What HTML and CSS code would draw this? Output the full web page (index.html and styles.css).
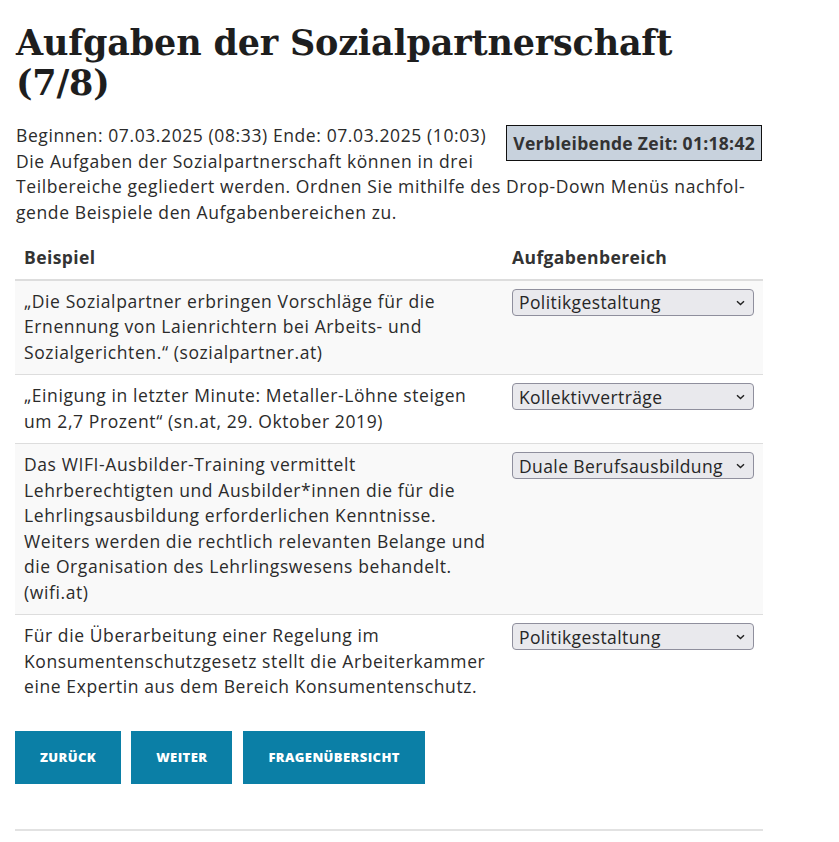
FILE: index.html
```html
<!DOCTYPE html>
<html lang="de">
<head>
<meta charset="utf-8">
<title>Aufgaben der Sozialpartnerschaft</title>
<link rel="stylesheet" href="styles.css">
</head>
<body>
<main class="page">
  <h1 class="title">Aufgaben der Sozialpartnerschaft (7/8)</h1>
  <div class="intro">
    <div class="timer">Verbleibende Zeit: 01:18:42</div>
    <p>Beginnen: 07.03.2025 (08:33) Ende: 07.03.2025 (10:03)<br>Die Aufgaben der Sozialpartnerschaft können in drei Teilbereiche gegliedert werden. Ordnen Sie mithilfe des Drop-Down Menüs nachfol&shy;gende Beispiele den Aufgabenbereichen zu.</p>
  </div>
  <table class="quiz">
    <thead>
      <tr><th class="col-ex">Beispiel</th><th class="col-sel">Aufgabenbereich</th></tr>
    </thead>
    <tbody>
      <tr class="odd">
        <td>„Die Sozialpartner erbringen Vorschläge für die Ernennung von Laienrichtern bei Arbeits- und Sozialgerichten.“ (sozialpartner.at)</td>
        <td><div class="pick-wrap"><select class="pick"><option>Politikgestaltung</option><option>Kollektivverträge</option><option>Duale Berufsausbildung</option></select><svg class="chev" width="9" height="6" viewBox="0 0 9 6"><path d="M1 1.2 L4.5 4.6 L8 1.2" fill="none" stroke="#222" stroke-width="1.4"/></svg></div></td>
      </tr>
      <tr>
        <td>„Einigung in letzter Minute: Metaller-Löhne steigen um 2,7 Prozent“ (sn.at, 29. Oktober 2019)</td>
        <td><div class="pick-wrap"><select class="pick"><option>Kollektivverträge</option><option>Politikgestaltung</option><option>Duale Berufsausbildung</option></select><svg class="chev" width="9" height="6" viewBox="0 0 9 6"><path d="M1 1.2 L4.5 4.6 L8 1.2" fill="none" stroke="#222" stroke-width="1.4"/></svg></div></td>
      </tr>
      <tr class="odd">
        <td>Das WIFI-Ausbilder-Training vermittelt Lehrberechtigten und Ausbilder*innen die für die Lehrlingsausbildung erforderlichen Kenntnisse. Weiters werden die rechtlich relevanten Belange und die Organisation des Lehrlingswesens behandelt. (wifi.at)</td>
        <td><div class="pick-wrap"><select class="pick"><option>Duale Berufsausbildung</option><option>Politikgestaltung</option><option>Kollektivverträge</option></select><svg class="chev" width="9" height="6" viewBox="0 0 9 6"><path d="M1 1.2 L4.5 4.6 L8 1.2" fill="none" stroke="#222" stroke-width="1.4"/></svg></div></td>
      </tr>
      <tr>
        <td>Für die Überarbeitung einer Regelung im Konsumentenschutzgesetz stellt die Arbeiterkammer eine Expertin aus dem Bereich Konsumentenschutz.</td>
        <td><div class="pick-wrap"><select class="pick"><option>Politikgestaltung</option><option>Kollektivverträge</option><option>Duale Berufsausbildung</option></select><svg class="chev" width="9" height="6" viewBox="0 0 9 6"><path d="M1 1.2 L4.5 4.6 L8 1.2" fill="none" stroke="#222" stroke-width="1.4"/></svg></div></td>
      </tr>
    </tbody>
  </table>
  <div class="actions">
    <button class="btn">Zurück</button>
    <button class="btn">Weiter</button>
    <button class="btn btn-wide">Fragenübersicht</button>
  </div>
  <hr class="rule">
</main>
</body>
</html>
```

FILE: styles.css
```css
html, body {
  margin: 0;
  padding: 0;
  background: #fff;
}
body {
  font-family: "Open Sans", "Noto Sans", sans-serif;
  font-size: 17.5px;
  letter-spacing: 0.6px;
  line-height: 25.5px;
  color: #2b2b2b;
}
.page {
  width: 748px;
  padding: 23px 0 0 15px;
}
.title {
  font-family: "DejaVu Serif", "Liberation Serif", serif;
  font-weight: bold;
  font-size: 35px;
  line-height: 40px;
  margin: 0 0 20px 1px;
  color: #1e1e1e;
  letter-spacing: -0.2px;
}
.intro {
  padding-left: 1px;
}
.intro p {
  margin: 0 0 12px 0;
}
.timer {
  float: right;
  margin: 2px 1px 4px 6px;
  padding: 4px 6px 3px 6px;
  background: #c8d2dd;
  border: 1px solid #111;
  font-weight: bold;
  font-size: 17.5px;
  letter-spacing: 0.3px;
  line-height: 27px;
  color: #333;
}
.quiz {
  width: 100%;
  border-collapse: collapse;
  border-spacing: 0;
}
.quiz th {
  text-align: left;
  font-weight: bold;
  letter-spacing: 0.4px;
  padding: 8px 9px 8px 9px;
  border-bottom: 2px solid #ddd;
  color: #333;
}
.col-sel { width: 242px; }
.quiz td {
  vertical-align: top;
  padding: 8px 9px 9px 9px;
  border-top: 1px solid #ddd;
}
.quiz tr.odd td {
  background: #f9f9f9;
}
.pick-wrap {
  position: relative;
  width: 242px;
}
.pick {
  appearance: none;
  -webkit-appearance: none;
  display: block;
  width: 242px;
  height: 27px;
  font-family: inherit;
  font-size: 17.5px;
  letter-spacing: 0.4px;
  color: #262626;
  background: #e9e9ed;
  border: 1px solid #8f8f9d;
  border-radius: 4px;
  padding: 0 20px 0 6px;
  margin: 0;
}
.chev {
  position: absolute;
  right: 9px;
  top: 11px;
  pointer-events: none;
}
.actions {
  display: flex;
  gap: 10px;
  margin-top: 22px;
}
.btn {
  height: 53px;
  padding: 0 25px;
  background: #0b7fa6;
  color: #fff;
  border: none;
  font-family: "Open Sans", sans-serif;
  font-weight: 800;
  font-size: 13px;
  text-transform: uppercase;
  letter-spacing: 0.4px;
}
.btn-wide {
  margin-left: 1px;
}
.rule {
  margin: 45px 0 0 0;
  border: none;
  border-top: 2px solid #e2e2e2;
}
```
